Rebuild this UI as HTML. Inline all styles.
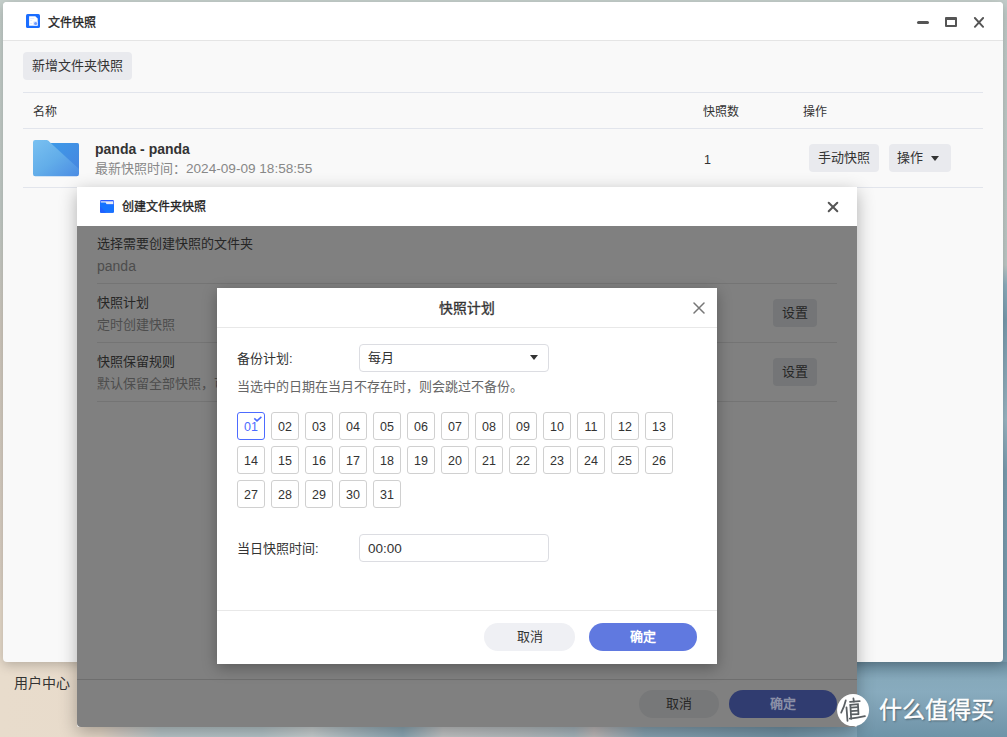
<!DOCTYPE html>
<html lang="zh-CN">
<head>
<meta charset="utf-8">
<style>
*{box-sizing:border-box;margin:0;padding:0}
html,body{width:1007px;height:737px;overflow:hidden}
body{position:relative;font-family:"Liberation Sans",sans-serif;color:#333;font-size:13px;
 background:linear-gradient(180deg,#c6d0cc 0%,#c4cdc9 28%,#d2cbc0 45%,#ddd2c5 75%,#e8dccc 100%);}
.abs{position:absolute}
#bgb{position:absolute;left:0;top:600px;width:1007px;height:137px;
 background:linear-gradient(90deg,#e8dccc 0%,#e8dbcb 10%,#d9d2cb 12%,#bccacd 16%,#b9c9cd 26%,#cdd4d5 31%,#aebfc6 35%,#8fabb8 40%,#c6c8c9 44%,#b9c0c3 52%,#aab9c0 57%,#c1bcbc 59%,#8aa6b5 64%,#7596a9 78%,#87aabd 87%,#82a6b9 100%)}
#bgbr{position:absolute;left:857px;top:662px;width:150px;height:75px;
 background:linear-gradient(180deg,#6d8fa2 0px,#86a9bb 18px,#88abbe 30px,#7a9db1 55px,#6e94a8 75px)}
#bgr{position:absolute;left:1000px;top:0;width:7px;height:662px;
 background:linear-gradient(180deg,#c3cecb 0px,#c0cbc8 265px,#8fb0c0 285px,#7a9db0 320px,#9cb8c5 420px,#7c9fb2 470px,#7a9db0 662px)}
.win{position:absolute;left:3px;top:2px;width:1000px;height:660px;background:#f9f9f9;border-radius:4px;overflow:hidden;
 box-shadow:0 3px 12px rgba(0,0,0,.22)}
.win .hd{position:absolute;left:0;top:0;width:1000px;height:39px;background:#fff;border-bottom:1px solid #e5e5e5}
.t{position:absolute;white-space:nowrap;line-height:1}
.btn{position:absolute;background:#e9eaee;border-radius:4px;color:#333;text-align:center}
.line{position:absolute;height:1px;background:#e2e5ec}
.modal{position:absolute;left:77px;top:187px;width:780px;height:540px;background:#fff;border-radius:0 0 2px 2px;overflow:hidden;
 box-shadow:0 5px 18px rgba(0,0,0,.3)}
.ov{position:absolute;left:0;top:39px;width:780px;height:501px;background:#808080;border-radius:0 0 4px 4px}
.dlg{position:absolute;left:217px;top:288px;width:500px;height:376px;background:#fff;border-radius:0;
 box-shadow:0 4px 14px rgba(0,0,0,.3)}
.day{position:absolute;width:28px;height:28px;border:1px solid #d0d0d0;border-radius:3px;font-size:12.5px;line-height:29px;text-align:center;color:#333}
.day.sel{border-color:#4d6bff;color:#4d6bff}
.num{font-size:13.6px}
</style>
</head>
<body>
<div id="bgb"></div>
<div id="bgbr"></div>
<div id="bgr"></div>

<div class="win">
  <div class="hd"></div>
  <svg class="abs" style="left:23px;top:12px" width="14" height="14" viewBox="0 0 14 14">
    <rect x="0" y="0" width="14" height="14" rx="1.6" fill="#1a6dff"/>
    <path d="M3.1 2.2h6.2l2.4 2.4v7.1h-8.6z" fill="#fff"/>
    <rect x="4.2" y="4.3" width="4" height="0.7" fill="#d8e4ff"/>
    <rect x="4.2" y="6.3" width="2" height="0.7" fill="#d8e4ff"/>
    <rect x="4.2" y="9.1" width="2" height="0.7" fill="#d8e4ff"/>
    <rect x="7.2" y="7.2" width="4.5" height="4.5" rx="1" fill="#dfe8ff"/>
    <circle cx="9.6" cy="9.4" r="1.5" fill="#6f9bff"/>
  </svg>
  <div class="t" style="left:45px;top:15px;font-size:12px;color:#222;-webkit-text-stroke:0.3px #222">文件快照</div>
  <div class="abs" style="left:914px;top:18.5px;width:12px;height:3px;background:#555;border-radius:1.5px"></div>
  <div class="abs" style="left:942px;top:15px;width:12px;height:10px;border:2px solid #555;border-top-width:3px;border-radius:1px"></div>
  <svg class="abs" style="left:970px;top:15px" width="12" height="12" viewBox="0 0 12 12"><path d="M1.9 1L10.1 9.8M10.1 1L1.9 9.8" stroke="#555" stroke-width="1.9" stroke-linecap="round"/></svg>
  <div class="btn" style="left:20px;top:50px;width:109px;height:28px;line-height:28px;font-size:13px">新增文件夹快照</div>
  <div class="line" style="left:20px;top:90px;width:960px"></div>
  <div class="t" style="left:30px;top:104px;font-size:12px;color:#333">名称</div>
  <div class="t" style="left:700px;top:104px;font-size:12px;color:#333">快照数</div>
  <div class="t" style="left:800px;top:104px;font-size:12px;color:#333">操作</div>
  <div class="line" style="left:20px;top:126px;width:960px"></div>
  <svg class="abs" style="left:30px;top:137.7px" width="46" height="37" viewBox="0 0 46 37">
    <defs>
      <linearGradient id="fg1" x1="0" y1="0" x2="1" y2="1"><stop offset="0" stop-color="#7ac1f1"/><stop offset="0.5" stop-color="#62ade9"/><stop offset="1" stop-color="#4a8be3"/></linearGradient>
      <linearGradient id="fg2" x1="0" y1="0" x2="1" y2="1"><stop offset="0" stop-color="#3e9ae8"/><stop offset="1" stop-color="#4686e0"/></linearGradient>
      <clipPath id="fc"><path d="M2.2 0h11.3q1.2 0 2 .7l2.2 2.3h26.1q2.2 0 2.2 2.2v28.9q0 2.2-2.2 2.2H2.2Q0 36.3 0 34.1V2.2Q0 0 2.2 0z"/></clipPath>
    </defs>
    <g clip-path="url(#fc)">
      <rect x="0" y="0" width="46" height="37" fill="url(#fg1)"/>
      <path d="M17.7 3L46 3V29z" fill="url(#fg2)"/>
      <path d="M46 29L46 37H30z" fill="#4a8be3" opacity="0.0"/>
    </g>
  </svg>
  <div class="t" style="left:92px;top:140px;font-size:14px;font-weight:bold;color:#333">panda - panda</div>
  <div class="t" style="left:92px;top:160px;font-size:13px;color:#888">最新快照时间：<span class="num">2024-09-09 18:58:55</span></div>
  <div class="t" style="left:701px;top:152px;font-size:12.5px;color:#333">1</div>
  <div class="btn" style="left:806px;top:142px;width:70px;height:28px;line-height:28px;font-size:13px">手动快照</div>
  <div class="btn" style="left:886px;top:142px;width:62px;height:28px;line-height:28px;font-size:13px;text-align:left;padding-left:8px">操作 <span style="display:inline-block;vertical-align:middle;margin-left:4px;width:0;height:0;border-left:4px solid transparent;border-right:4px solid transparent;border-top:5px solid #333"></span></div>
  <div class="line" style="left:20px;top:185px;width:960px"></div>
</div>

<div class="t" style="left:14px;top:676px;font-size:14px;color:#333">用户中心</div>

<div class="modal">
  <svg class="abs" style="left:23px;top:12.8px" width="14" height="13" viewBox="0 0 14 13">
    <rect x="0" y="0" width="14" height="12.8" rx="1.4" fill="#2d5bff"/>
    <rect x="0.7" y="1.3" width="12.6" height="3" fill="#e6ecf8"/>
    <path d="M0 2.5h5.6l1.1 1.9H14v7q0 1.4-1.4 1.4H1.4Q0 12.8 0 11.4z" fill="#1673ff"/>
    <path d="M0 6l6 6.8H1.4Q0 12.8 0 11.4z" fill="#2060ff"/>
  </svg>
  <div class="t" style="left:45px;top:13.5px;font-size:12px;color:#222;-webkit-text-stroke:0.3px #222">创建文件夹快照</div>
  <svg class="abs" style="left:750px;top:14px" width="12" height="12" viewBox="0 0 12 12"><path d="M1.7 1.7L10.3 10.3M10.3 1.7L1.7 10.3" stroke="#555" stroke-width="2" stroke-linecap="round"/></svg>
  <div class="ov">
    <div class="t" style="left:20px;top:11px;font-size:13px;color:#262626">选择需要创建快照的文件夹</div>
    <div class="t" style="left:20px;top:33px;font-size:14px;color:#4d4d4d">panda</div>
    <div class="line" style="left:20px;top:57px;width:740px;background:#747474"></div>
    <div class="t" style="left:20px;top:70px;font-size:13px;color:#262626">快照计划</div>
    <div class="t" style="left:20px;top:92px;font-size:13px;color:#4d4d4d">定时创建快照</div>
    <div class="btn" style="left:696px;top:73px;width:44px;height:28px;line-height:28px;font-size:13px;background:#747577;color:#262626">设置</div>
    <div class="line" style="left:20px;top:116px;width:740px;background:#747474"></div>
    <div class="t" style="left:20px;top:129px;font-size:13px;color:#262626">快照保留规则</div>
    <div class="t" style="left:20px;top:151px;font-size:13px;color:#4d4d4d">默认保留全部快照，可</div>
    <div class="btn" style="left:696px;top:132px;width:44px;height:28px;line-height:28px;font-size:13px;background:#747577;color:#262626">设置</div>
    <div class="line" style="left:20px;top:175px;width:740px;background:#747474"></div>
    <div class="line" style="left:0px;top:453px;width:780px;background:#6e6e6e"></div>
    <div class="btn" style="left:562px;top:464px;width:80px;height:28px;line-height:28px;border-radius:14px;font-size:13px;background:#777879;color:#262626">取消</div>
    <div class="btn" style="left:652px;top:464px;width:108px;height:28px;line-height:28px;border-radius:14px;font-size:13px;background:#303c70;color:#8a8fa6;font-weight:bold">确定</div>
  </div>
</div>

<div class="dlg">
  <div class="t" style="left:0;top:13.5px;width:500px;text-align:center;font-size:13.8px;color:#333;-webkit-text-stroke:0.35px #333">快照计划</div>
  <svg class="abs" style="left:476px;top:14px" width="12" height="12" viewBox="0 0 12 12"><path d="M1 1L11 11M11 1L1 11" stroke="#777" stroke-width="1.5" stroke-linecap="round"/></svg>
  <div class="abs" style="left:0;top:39px;width:500px;height:1px;background:#e8e8e8"></div>
  <div class="t" style="left:20px;top:64px;font-size:13px;color:#333">备份计划:</div>
  <div class="abs" style="left:142px;top:56px;width:190px;height:28px;border:1px solid #dcdde2;border-radius:4px"></div>
  <div class="t" style="left:151px;top:63px;font-size:13px;color:#333">每月</div>
  <div class="abs" style="left:313px;top:67px;width:0;height:0;border-left:4px solid transparent;border-right:4px solid transparent;border-top:5px solid #333"></div>
  <div class="t" style="left:20px;top:92px;font-size:13px;color:#666">当选中的日期在当月不存在时，则会跳过不备份。</div>
  <div class="day sel" style="left:20px;top:124px">01<svg style="position:absolute;left:15px;top:2px" width="10" height="8" viewBox="0 0 10 8"><path d="M1.3 3.4L4 5.9L8.4 1.9" stroke="#4a6aff" stroke-width="1.5" fill="none"/></svg></div>
  <div class="day" style="left:54px;top:124px">02</div>
  <div class="day" style="left:88px;top:124px">03</div>
  <div class="day" style="left:122px;top:124px">04</div>
  <div class="day" style="left:156px;top:124px">05</div>
  <div class="day" style="left:190px;top:124px">06</div>
  <div class="day" style="left:224px;top:124px">07</div>
  <div class="day" style="left:258px;top:124px">08</div>
  <div class="day" style="left:292px;top:124px">09</div>
  <div class="day" style="left:326px;top:124px">10</div>
  <div class="day" style="left:360px;top:124px">11</div>
  <div class="day" style="left:394px;top:124px">12</div>
  <div class="day" style="left:428px;top:124px">13</div>
  <div class="day" style="left:20px;top:158px">14</div>
  <div class="day" style="left:54px;top:158px">15</div>
  <div class="day" style="left:88px;top:158px">16</div>
  <div class="day" style="left:122px;top:158px">17</div>
  <div class="day" style="left:156px;top:158px">18</div>
  <div class="day" style="left:190px;top:158px">19</div>
  <div class="day" style="left:224px;top:158px">20</div>
  <div class="day" style="left:258px;top:158px">21</div>
  <div class="day" style="left:292px;top:158px">22</div>
  <div class="day" style="left:326px;top:158px">23</div>
  <div class="day" style="left:360px;top:158px">24</div>
  <div class="day" style="left:394px;top:158px">25</div>
  <div class="day" style="left:428px;top:158px">26</div>
  <div class="day" style="left:20px;top:192px">27</div>
  <div class="day" style="left:54px;top:192px">28</div>
  <div class="day" style="left:88px;top:192px">29</div>
  <div class="day" style="left:122px;top:192px">30</div>
  <div class="day" style="left:156px;top:192px">31</div>
  <div class="t" style="left:20px;top:254px;font-size:13px;color:#333">当日快照时间:</div>
  <div class="abs" style="left:142px;top:246px;width:190px;height:28px;border:1px solid #dcdde2;border-radius:4px"></div>
  <div class="t" style="left:151px;top:254px;font-size:13.5px;color:#333">00:00</div>
  <div class="abs" style="left:0;top:322px;width:500px;height:1px;background:#e8e8e8"></div>
  <div class="btn" style="left:267px;top:335px;width:91px;height:28px;line-height:28px;border-radius:14px;font-size:13px;background:#eff0f4">取消</div>
  <div class="btn" style="left:372px;top:335px;width:108px;height:28px;line-height:28px;border-radius:14px;font-size:13px;background:#6079e0;color:#fff;font-weight:bold">确定</div>
</div>

<svg class="abs" style="left:830px;top:685px" width="50" height="50" viewBox="0 0 737 737">
  <circle cx="340" cy="370" r="236" fill="#fff"/>
  <g stroke="#5a5f63" stroke-width="26" stroke-linecap="round" fill="none">
    <path d="M232 228Q210 320 165 408"/>
    <path d="M243 330L258 528"/>
    <path d="M295 250L438 238"/>
    <path d="M345 198L352 246"/>
    <path d="M300 292L312 498"/>
    <path d="M300 292L412 282L420 430"/>
    <path d="M312 335L412 327"/>
    <path d="M312 385L414 378"/>
    <path d="M312 432L416 428"/>
    <path d="M292 496Q400 480 515 458"/>
  </g>
</svg>
<div class="t" style="left:879px;top:699px;font-size:23px;color:#fff;-webkit-text-stroke:0.4px #fff;text-shadow:1px 1px 2px rgba(0,0,0,.45)">什么值得买</div>
</body>
</html>
